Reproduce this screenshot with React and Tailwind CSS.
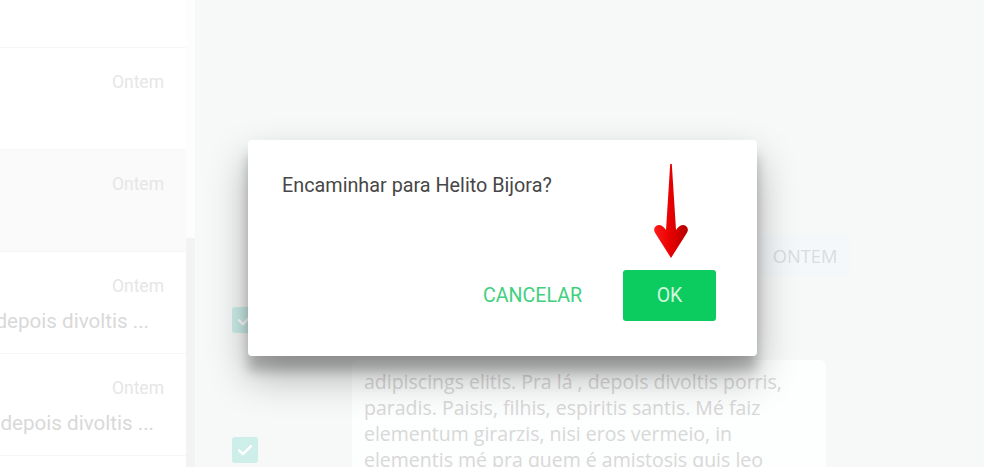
import React from "react";

const roboto = { fontFamily: "Roboto, 'Liberation Sans', sans-serif" };
const openSans = { fontFamily: "'Open Sans', 'Liberation Sans', sans-serif" };

const Check = () => (
  <div className="w-[26px] h-[26px] shrink-0 rounded-[3px] bg-[#cdeee9] flex items-center justify-center">
    <svg viewBox="0 0 24 24" className="w-[20px] h-[20px]" fill="none" stroke="#ffffff" strokeWidth="3" strokeLinecap="round" strokeLinejoin="round">
      <path d="M5 12.5l4.5 4.5L19 7.5" />
    </svg>
  </div>
);

const ListRow = ({ preview, pr, active }) => (
  <div className={`h-[102px] shrink-0 border-b border-[#f6f6f6] pt-[23px] overflow-hidden ${active ? "bg-[#fafafa]" : "bg-white"}`}>
    <div className="text-right pr-[22px] text-[17.5px] leading-[22px] text-[#e6e6e6]">Ontem</div>
    {preview && (
      <div className={`mt-[10px] flex justify-end whitespace-nowrap text-[20.6px] leading-[28px] text-[#d9d9d9] ${pr}`}>
        Pra lá , depois divoltis ...
      </div>
    )}
  </div>
);

const Arrow = () => (
  <svg viewBox="0 0 44 102" className="absolute left-[650px] top-[160px] w-[44px] h-[102px]">
    <defs>
      <linearGradient id="ar" x1="0" y1="0" x2="1" y2="0">
        <stop offset="0" stopColor="#ff1a1a" />
        <stop offset="0.5" stopColor="#e60000" />
        <stop offset="1" stopColor="#b30000" />
      </linearGradient>
    </defs>
    <path
      d="M20.2 4 L21.8 4 L26 70 Q31 63 36 66 Q39.5 69 36.5 73.5 L21 98 L5.5 73.5 Q2.5 69 6 66 Q11 63 16 70 Z"
      fill="url(#ar)"
    />
  </svg>
);

export default function App() {
  return (
    <div className="relative w-[984px] h-[467px] overflow-hidden flex bg-[#f7f8f8]" style={roboto}>
      {/* conversation list */}
      <div className="w-[186px] shrink-0 bg-white flex flex-col">
        <div className="h-[48px] shrink-0 border-b border-[#f6f6f6]" />
        <ListRow />
        <ListRow active />
        <ListRow preview pr="pr-[37px]" />
        <ListRow preview pr="pr-[32px]" />
      </div>

      {/* scrollbar */}
      <div className="w-[9px] shrink-0 flex flex-col">
        <div className="h-[238px] shrink-0 bg-[#fdfdfd]" />
        <div className="flex-1 bg-[#f3f3f3]" />
      </div>

      {/* chat pane */}
      <div className="flex-1 flex flex-col pt-[235px]">
        <div className="shrink-0 ml-[565px] w-[90px] h-[41px] rounded-[6px] bg-[#f4f8fb] flex items-center justify-center text-[18.3px] text-[#dcdcdc]" style={openSans}>
          ONTEM
        </div>
        <div className="shrink-0 mt-[14px] h-[60px] pl-[37px] flex items-center">
          <Check />
        </div>
        <div className="shrink-0 mt-[10px] pl-[37px] flex items-center gap-[94px]">
          <Check />
          <div
            className="w-[474px] h-[180px] shrink-0 rounded-[6px] bg-[#fdfefe] pl-[12px] pt-[9px] text-[19.5px] leading-[26px] text-[#d8d8d8] whitespace-nowrap"
            style={openSans}
          >
            <p>adipiscings elitis. Pra lá , depois divoltis porris,</p>
            <p>paradis. Paisis, filhis, espiritis santis. Mé faiz</p>
            <p>elementum girarzis, nisi eros vermeio, in</p>
            <p>elementis mé pra quem é amistosis quis leo</p>
          </div>
        </div>
      </div>

      {/* dialog */}
      <div className="absolute left-[248px] top-[140px] w-[509px] h-[216px] bg-white rounded-[4px] shadow-[0_20px_40px_rgba(0,0,0,0.30),0_15px_12px_rgba(0,0,0,0.22)] flex flex-col">
        <p className="pl-[34px] pt-[33px] text-[19.8px] leading-[26px] text-[#474747]">Encaminhar para Helito Bijora?</p>
        <div className="mt-auto pb-[35px] pr-[41px] flex justify-end items-center gap-[41px]">
          <button className="text-[19.6px] text-[#3fd07e]">CANCELAR</button>
          <button className="w-[93px] h-[51px] rounded-[3px] bg-[#0ccb5f] text-[19.5px] text-[#d3f7df]">OK</button>
        </div>
      </div>

      <Arrow />
    </div>
  );
}
